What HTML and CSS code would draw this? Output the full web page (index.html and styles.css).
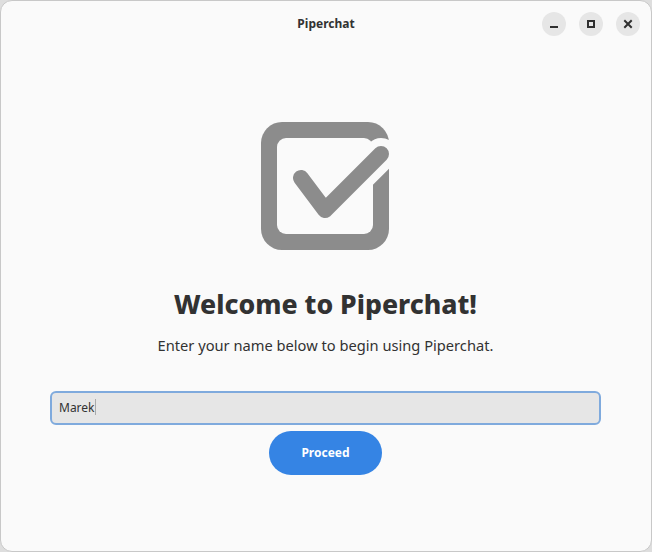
FILE: index.html
```html
<!DOCTYPE html>
<html lang="en">
<head>
<meta charset="utf-8">
<title>Piperchat</title>
<link rel="stylesheet" href="styles.css">
</head>
<body>
<div class="window">
  <header class="headerbar">
    <h1 class="title">Piperchat</h1>
    <div class="controls">
      <button class="control" aria-label="Minimize"><svg width="16" height="16"><path d="M4 10h8v2H4z"/></svg></button>
      <button class="control" aria-label="Maximize"><svg width="16" height="16"><path fill-rule="evenodd" d="M4 4h8v8H4zM6 6v4h4V6z"/></svg></button>
      <button class="control" aria-label="Close"><svg width="16" height="16"><path class="cross" d="M5 5l6 6M11 5l-6 6"/></svg></button>
    </div>
  </header>
  <main class="content">
    <svg class="logo" width="128" height="128" viewBox="0 0 128 128">
      <rect class="box" width="128" height="128" rx="21"/>
      <rect class="inside" x="16" y="16" width="96" height="96" rx="9"/>
      <path class="gap" d="M40 56L64 88L120 32"/>
      <path class="check" d="M40 56L64 88L120 32"/>
    </svg>
    <h2 class="heading">Welcome to Piperchat!</h2>
    <p class="description">Enter your name below to begin using Piperchat.</p>
    <div class="entry"><span>Marek</span><i class="caret"></i></div>
    <button class="proceed">Proceed</button>
  </main>
</div>
</body>
</html>
```
FILE: styles.css
```css
* { box-sizing: border-box; }
body { margin: 0; background: #dedede; font-family: "Noto Sans", sans-serif; color: #323232; }
.window { height: 552px; border: 1px solid #c8c8c8; border-radius: 12px; background: #fafafa; }
.headerbar { display: grid; grid-template-columns: 1fr auto 1fr; align-items: center; height: 46px; padding: 0 11px; }
.title { grid-column: 2; margin: -2px 0 0; font-size: 12px; font-weight: 700; }
.controls { display: flex; justify-content: flex-end; gap: 13px; }
.control { display: grid; place-items: center; width: 24px; height: 24px; padding: 0; border: 0; border-radius: 50%; background: #e6e6e6; }
.control svg { fill: #2f2f2f; }
.cross { stroke: #2f2f2f; stroke-width: 2; stroke-linecap: square; }
.content { display: flex; flex-direction: column; align-items: center; padding: 75px 50px 0 49px; }
.logo { display: block; margin-right: 1px; }
.box { fill: #8c8c8c; }
.inside { fill: #fafafa; }
.gap, .check { fill: none; stroke: #8c8c8c; stroke-width: 16; stroke-linecap: round; stroke-linejoin: round; }
.gap { stroke: #fafafa; stroke-width: 32; }
.heading { margin: 35px 0 0; font-size: 26.6px; line-height: 38px; font-weight: 800; }
.description { margin: 11px 0 0; font-size: 14.67px; line-height: 22px; }
.entry { display: flex; align-items: center; align-self: stretch; height: 34px; margin-top: 35px; padding: 0 7px 2px; border: 2px solid #7faadd; border-radius: 6px; background: #e6e6e6; font-size: 12px; }
.caret { width: 1px; height: 16px; background: #aaa; }
.proceed { width: 113px; height: 44px; margin-top: 6px; padding: 0 0 2px; border: 0; border-radius: 22px; background: #3584e4; color: #fff; font: 700 12px "Noto Sans", sans-serif; }
```
